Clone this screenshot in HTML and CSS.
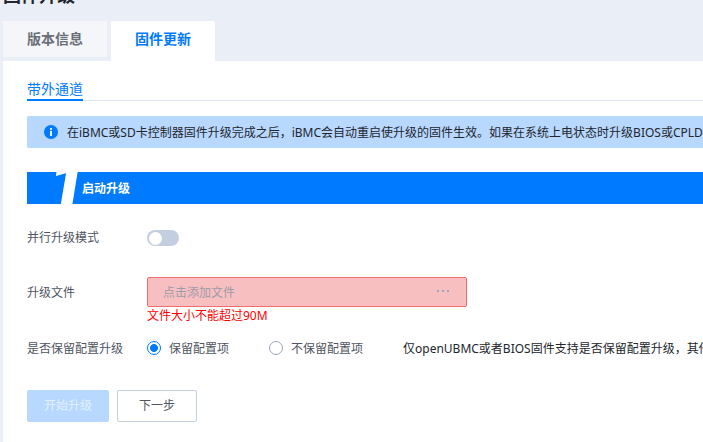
FILE: index.html
```html
<!DOCTYPE html>
<html lang="zh-CN">
<head>
<meta charset="utf-8">
<title>固件升级</title>
<link rel="stylesheet" href="styles.css">
</head>
<body>
<div class="page">
  <header class="title-wrap"><h1 class="title">固件升级</h1></header>
  <nav class="tabs">
    <div class="tab">版本信息</div>
    <div class="tab active">固件更新</div>
  </nav>
  <main class="panel">
    <div class="subtabs"><span class="subtab">带外通道</span></div>
    <div class="alert">
      <svg class="alert-icon" viewBox="0 0 14 14" width="14" height="14"><circle cx="7" cy="7" r="7" fill="#007aff"/><rect x="6.1" y="3" width="1.8" height="1.8" fill="#fff"/><rect x="6.1" y="5.8" width="1.8" height="5.2" fill="#fff"/></svg>
      <span class="alert-text">在iBMC或SD卡控制器固件升级完成之后，iBMC会自动重启使升级的固件生效。如果在系统上电状态时升级BIOS或CPLD固件，需要重启系统后生效。</span>
    </div>
    <div class="step">
      <span class="step-num">1</span>
      <span class="step-title">启动升级</span>
    </div>
    <div class="row row-mode">
      <label class="label">并行升级模式</label>
      <span class="switch"><span class="knob"></span></span>
    </div>
    <div class="row row-file">
      <label class="label">升级文件</label>
      <div class="file"><span class="file-hint">点击添加文件</span>
        <svg class="file-dots" viewBox="0 0 12 2" width="12" height="2"><rect width="2" height="2" fill="#9aa5c4"/><rect x="5" width="2" height="2" fill="#9aa5c4"/><rect x="10" width="2" height="2" fill="#9aa5c4"/></svg>
      </div>
    </div>
    <div class="error">文件大小不能超过90M</div>
    <div class="row row-keep">
      <label class="label">是否保留配置升级</label>
      <span class="radio checked"></span><span class="radio-text">保留配置项</span>
      <span class="radio second"></span><span class="radio-text">不保留配置项</span>
      <span class="note">仅openUBMC或者BIOS固件支持是否保留配置升级，其他固件升级默认保留配置</span>
    </div>
    <div class="actions">
      <button class="btn primary" disabled>开始升级</button>
      <button class="btn">下一步</button>
    </div>
  </main>
</div>
</body>
</html>
```
FILE: styles.css
```css
* { box-sizing: border-box; }
html, body { margin: 0; height: 100%; overflow: hidden; }
body {
  background: #eaeef6;
  font-family: "Noto Sans", "Noto Sans CJK SC", sans-serif;
  font-size: 12px;
  line-height: 18px;
  color: #4f5561;
}
.page { width: 703px; height: 442px; overflow: hidden; display: flex; flex-direction: column; }
.title-wrap { height: 21px; overflow: hidden; display: flex; flex-direction: column; justify-content: flex-end; padding-left: 3px; }
.title { margin: 0 0 14px; font-size: 18px; line-height: 24px; font-weight: 700; color: #23262c; flex: none; }
.tabs { display: flex; gap: 4px; margin-left: 3px; height: 40px; align-items: flex-start; flex: none; }
.tab {
  width: 104px; height: 36px; line-height: 36px; text-align: center;
  background: #f4f6fa; border-radius: 2px 2px 0 0;
  font-size: 14px; font-weight: 700; color: #6b6f78;
}
.tab.active { height: 40px; background: #fff; color: #007aff; }
.panel { flex: 1; margin-left: 3px; background: #fff; padding: 0 0 0 24px; min-width: 0; overflow: hidden; }
.subtabs { height: 40px; border-bottom: 1px solid #dfe6f1; display: flex; align-items: flex-end; margin-bottom: 15px; }
.subtab { font-size: 14px; line-height: 20px; height: 29px; padding-top: 7px; color: #007aff; border-bottom: 2px solid #007aff; margin-bottom: -1px; width: 56px; white-space: nowrap; }
.alert { height: 32px; background: #b8d8ff; border-radius: 2px 0 0 2px; display: flex; align-items: center; padding-left: 17px; white-space: nowrap; overflow: hidden; margin-bottom: 24px; }
.alert-icon { flex: none; margin-right: 9px; }
.alert-text { font-size: 12px; line-height: 20px; color: #23262c; padding-top: 1px; }
.step { position: relative; height: 32px; background: #007aff; display: flex; align-items: center; padding-left: 55px; margin-bottom: 26px; }
.step-num {
  position: absolute; left: 23px; top: -19px; font: italic 900 62px/62px Roboto, sans-serif;
  color: #fff; height: 51px; overflow: hidden; -webkit-text-stroke: 1.5px #fff;
}
.step-title { font-size: 12px; font-weight: 700; color: #fff; padding-top: 2px; }
.row { display: flex; align-items: center; white-space: nowrap; }
.label { width: 120px; flex: none; color: #4f5561; padding-top: 1px; }
.row-mode { height: 16px; margin-bottom: 31px; }
.row-mode .label { padding-top: 0; padding-bottom: 1px; }
.switch { width: 32px; height: 16px; border-radius: 8px; background: #c3cfe0; padding: 1.5px; display: block; }
.knob { display: block; width: 13px; height: 13px; border-radius: 50%; background: #fff; }
.row-file { height: 30px; }
.file { width: 320px; height: 30px; background: #f8bfc0; border: 1px solid #f56c6c; border-radius: 2px; display: flex; align-items: center; justify-content: space-between; padding: 1px 17px 0 15px; }
.file-hint { color: #9c9ca8; }
.file-dots { flex: none; margin-top: -4px; }
.error { margin: 0 0 0 120px; height: 17px; line-height: 17px; color: #f00; }
.row-keep { margin-top: 15px; height: 18px; }
.row-keep .label, .radio-text, .note { padding-top: 1px; }
.radio { width: 14px; height: 14px; border-radius: 50%; border: 1px solid #9aa5b8; flex: none; background: #fff; margin-right: 8px; }
.radio.checked { border-color: #007aff; background: radial-gradient(circle, #007aff 0 3.6px, #fff 4.2px); }
.radio.second { margin-left: 40px; }
.radio-text { color: #4f5561; width: 60px; flex: none; }
.radio.second + .radio-text { width: 72px; }
.note { margin-left: 40px; color: #23262c; }
.actions { display: flex; gap: 8px; margin-top: 33px; }
.btn { width: 80px; height: 32px; background: #fff; border: 1px solid #c3cfe0; border-radius: 2px; font: 12px/18px "Noto Sans CJK SC", sans-serif; color: #4f5561; padding: 0 0 2px; }
.btn.primary { width: 82px; background: #b8d8ff; border-color: #b8d8ff; color: #e3f0ff; }
```
